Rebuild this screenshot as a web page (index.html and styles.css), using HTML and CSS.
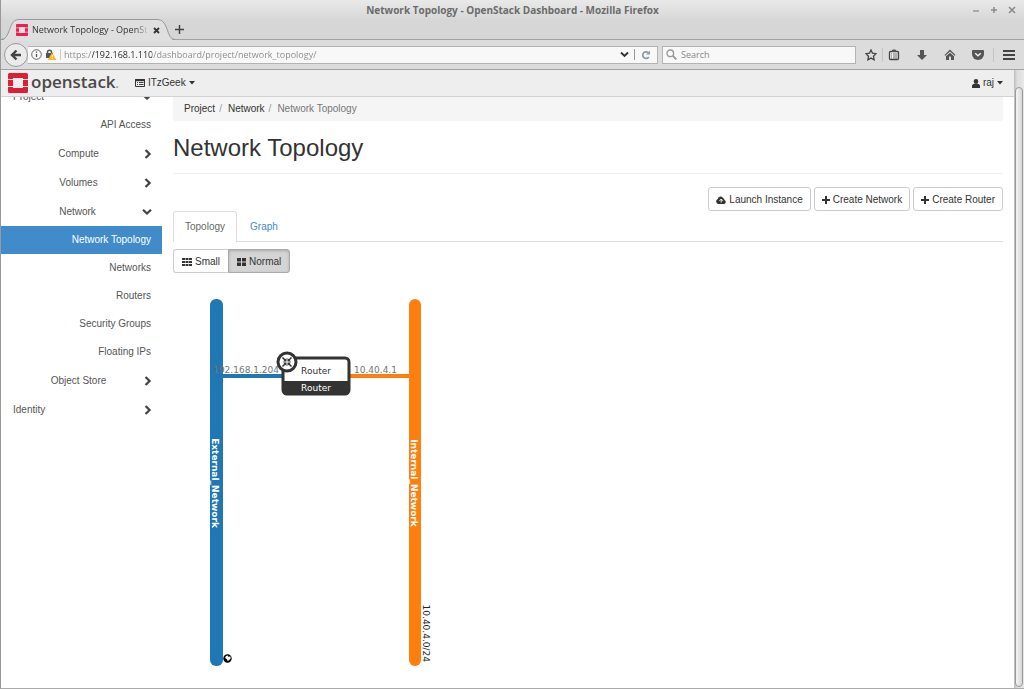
FILE: index.html
```html
<!DOCTYPE html>
<html lang="en">
<head>
<meta charset="utf-8">
<title>Network Topology - OpenStack Dashboard</title>
<link rel="stylesheet" href="styles.css">
</head>
<body>
<svg class="defs" aria-hidden="true">
  <symbol id="chev-right" viewBox="0 0 8 10"><path d="M1.500 1 5.600 5 1.500 9" fill="none" stroke="#444" stroke-width="2.200"/></symbol>
  <symbol id="chev-down" viewBox="0 0 10 8"><path d="M1 1.800 5 5.600 9 1.800" fill="none" stroke="#444" stroke-width="2.200"/></symbol>
  <symbol id="caret" viewBox="0 0 6 4"><path d="M0 0h6L3 3.500z" fill="#333"/></symbol>
  <symbol id="plus" viewBox="0 0 8 8"><path d="M3 0h2v3h3v2H5v3H3V5H0V3h3z" fill="#333"/></symbol>
  <symbol id="stack-mark" viewBox="0 0 20 20"><path d="M1.500 0h17Q20 0 20 1.500V6h-5V5H5v1H0V1.500Q0 0 1.500 0zM0 7h5v6H0zM15 7h5v6h-5zM0 14h5v1h10v-1h5v4.500Q20 20 18.500 20h-17Q0 20 0 18.500z"/></symbol>
</svg>

<div class="window">
  <header class="titlebar">
    <span class="title">Network Topology - OpenStack Dashboard - Mozilla Firefox</span>
    <div class="win-controls">
      <button aria-label="Minimize"><svg width="8" height="8"><path d="M1 5h6" stroke="#999" stroke-width="1.500"/></svg></button>
      <button aria-label="Maximize"><svg width="8" height="8"><path d="M1 4h6M4 1v6" stroke="#8a8a8a" stroke-width="1.500"/></svg></button>
      <button aria-label="Close"><svg width="8" height="8"><path d="m1 1 6 6M7 1 1 7" stroke="#8a8a8a" stroke-width="1.600"/></svg></button>
    </div>
  </header>

  <div class="tabstrip">
    <div class="tab">
      <svg class="tab-shape" viewBox="0 0 174 22"><path d="M0 21.500C10 21.500 7 1 17 .5H157C168 1 165 21.500 174 21.500V22H0z" fill="#dfdfdf"/><path d="M0 20.500C10 20.500 7 1 17 .5H157C168 1 165 20.500 174 20.500" fill="none" stroke="#999"/></svg>
      <svg class="favicon" width="12" height="12"><use href="#stack-mark" fill="#ee1f4e"/></svg>
      <span class="tab-label">Network Topology - OpenSt</span>
      <button class="tab-close" aria-label="Close tab"><svg width="7" height="7"><path d="m1 1 5 5M6 1 1 6" stroke="#333" stroke-width="1.800"/></svg></button>
    </div>
    <button class="new-tab" aria-label="New tab"><svg width="9" height="9"><path d="M0 4.500h9M4.500 0v9" stroke="#444" stroke-width="1.500"/></svg></button>
  </div>

  <div class="toolbar">
    <button class="back" aria-label="Back"><svg width="12" height="12" viewBox="0 0 12 12"><path d="M6.500 1.500 2 6l4.500 4.500M2 6h9" fill="none" stroke="#444" stroke-width="2.400"/></svg></button>
    <div class="urlbar">
      <svg width="11" height="11"><circle cx="5.500" cy="5.500" r="4.800" fill="none" stroke="#666"/><path d="M5.500 5v3M5.500 2.500v1.300" stroke="#555" stroke-width="1.300"/></svg>
      <svg width="12" height="11" viewBox="0 0 12 11"><path d="M2.500 5V3.300a2 2 0 0 1 4 0V5" fill="none" stroke="#555" stroke-width="1.500"/><rect x="1" y="4" width="7" height="5" fill="#555"/><path d="M7 3.500 11.500 11H2.800z" fill="#fbb917"/><path d="M7.200 6v2.300M7.200 9v1" stroke="#fff"/></svg>
      <span class="url-divider"></span>
      <input class="url" type="text" aria-label="Address" value="https://192.168.1.110/dashboard/project/network_topology/">
      <button aria-label="Show history"><svg width="9" height="7"><path d="m1 1.500 3.500 3.500L8 1.500" fill="none" stroke="#333" stroke-width="1.900"/></svg></button>
      <span class="url-divider dark"></span>
      <button class="reload" aria-label="Reload"><svg width="10" height="10" viewBox="0 0 10 10"><path d="M7.800 7A3.300 3.300 0 1 1 7 2.500" fill="none" stroke="#8d99a5" stroke-width="1.700"/><path d="M9 .5v4H5z" fill="#8d99a5"/></svg></button>
    </div>
    <label class="search">
      <svg width="11" height="11"><circle cx="4.300" cy="4.300" r="3.300" fill="none" stroke="#999" stroke-width="1.400"/><path d="m7 7 3.300 3.300" stroke="#999" stroke-width="1.800"/></svg>
      <input type="text" aria-label="Search" placeholder="Search">
    </label>
    <div class="tools">
      <button aria-label="Bookmark"><svg width="12" height="12" viewBox="0 0 12 12"><path d="m6 1 1.500 3.200 3.500.5-2.500 2.500.6 3.600L6 9.100l-3.100 1.700.6-3.600L1 4.700l3.500-.5z" fill="none" stroke="#444" stroke-width="1.300"/></svg></button>
      <span class="tool-divider near"></span>
      <div class="tool-group">
        <button aria-label="Bookmarks list"><svg width="12" height="12" viewBox="0 0 12 12"><rect x="1.500" y="2.500" width="9" height="8" rx="1" fill="#eee" stroke="#444" stroke-width="1.300"/><path d="M4.500 1h3v1.500h-3z" fill="#555" stroke="#555"/><path d="M3 5h1M5 5h4.500M3 7h1M5 7h4.500M3 9h1M5 9h4.500" stroke="#666" stroke-width=".9"/></svg></button>
        <button aria-label="Downloads"><svg width="12" height="12"><path d="M4 1h4v5h3L6 11 1 6h3z" fill="#555"/></svg></button>
        <button aria-label="Home"><svg width="12" height="12"><path d="M6 .5 11.500 6l-.7.700L6 2.500 1.200 6.700.5 6zM6 3.800l4 3.400V11H7V7.500H5V11H2V7.200z" fill="#555"/></svg></button>
        <button aria-label="Pocket"><svg width="12" height="12"><path d="M1 1h10q1 0 1 1v3a6 6 0 0 1-12 0V2q0-1 1-1z" fill="#555"/><path d="m3.200 4.200 2.800 2.600 2.800-2.600" fill="none" stroke="#eee" stroke-width="1.500"/></svg></button>
      </div>
      <span class="tool-divider far"></span>
      <button aria-label="Menu"><svg width="12" height="12"><path d="M0 2h12M0 6h12M0 10h12" stroke="#444" stroke-width="2"/></svg></button>
    </div>
  </div>

  <div class="viewport">
    <div class="page">
      <nav class="navbar">
        <a class="brand" href="#"><svg width="20" height="20"><use href="#stack-mark" fill="#dc1f36"/></svg><span>openstack<small>.</small></span></a>
        <button class="nav-btn"><svg width="10" height="8"><path d="M.5.500h9v7h-9z" fill="none" stroke="#333"/><path d="M0 1.200h10" stroke="#333" stroke-width="2"/><path d="M2 3.500h1M4 3.500h4.500M2 5.500h1M4 5.500h4.500" stroke="#444"/></svg>ITzGeek<svg width="6" height="4"><use href="#caret"/></svg></button>
        <button class="nav-btn user"><svg width="8" height="9"><circle cx="4" cy="2.400" r="2.300" fill="#333"/><path d="M0 9V7q0-2.500 4-2.500T8 7v2z" fill="#333"/></svg>raj<svg width="6" height="4"><use href="#caret"/></svg></button>
      </nav>

      <div class="columns">
        <aside class="sidebar">
          <a class="root" href="#"><span>Project</span><svg width="10" height="8"><use href="#chev-down"/></svg></a>
          <a class="leaf" href="#">API Access</a>
          <a class="group" href="#"><span>Compute</span><svg width="8" height="10"><use href="#chev-right"/></svg></a>
          <a class="group" href="#"><span>Volumes</span><svg width="8" height="10"><use href="#chev-right"/></svg></a>
          <a class="group" href="#"><span>Network</span><svg width="10" height="8"><use href="#chev-down"/></svg></a>
          <a class="leaf active" href="#">Network Topology</a>
          <a class="leaf" href="#">Networks</a>
          <a class="leaf" href="#">Routers</a>
          <a class="leaf" href="#">Security Groups</a>
          <a class="leaf" href="#">Floating IPs</a>
          <a class="group" href="#"><span>Object Store</span><svg width="8" height="10"><use href="#chev-right"/></svg></a>
          <a class="root" href="#"><span>Identity</span><svg width="8" height="10"><use href="#chev-right"/></svg></a>
        </aside>

        <main class="main">
          <nav class="crumbs" aria-label="Breadcrumb"><a href="#">Project</a><i>/</i><a href="#">Network</a><i>/</i><span>Network Topology</span></nav>
          <h1>Network Topology</h1>
          <div class="actions">
            <button class="btn"><svg width="10" height="8"><path d="M2.500 8A2.500 2.500 0 0 1 1.500 3.300 3 3 0 0 1 7 2a2.300 2.300 0 0 1 1.500 2A2.100 2.100 0 0 1 8 8z" fill="#333"/><path d="M5.200 6.500V4M3.500 4.800 5.200 3l1.700 1.800" stroke="#fff" fill="none"/></svg>Launch Instance</button>
            <button class="btn"><svg width="8" height="8"><use href="#plus"/></svg>Create Network</button>
            <button class="btn"><svg width="8" height="8"><use href="#plus"/></svg>Create Router</button>
          </div>
          <div class="tabs" role="tablist">
            <a class="page-tab current" role="tab" aria-selected="true" href="#">Topology</a>
            <a class="page-tab" role="tab" href="#">Graph</a>
          </div>
          <div class="sizes">
            <button class="btn"><svg width="10" height="8"><path d="M0 0h3v2H0zM3.500 0h3v2h-3zM7 0h3v2H7zM0 3h3v2H0zM3.500 3h3v2h-3zM7 3h3v2H7zM0 6h3v2H0zM3.500 6h3v2h-3zM7 6h3v2H7z" fill="#333"/></svg>Small</button>
            <button class="btn pressed"><svg width="9" height="8"><path d="M0 0h4v3.500H0zM5 0h4v3.500H5zM0 4.500h4V8H0zM5 4.500h4V8H5z" fill="#333"/></svg>Normal</button>
          </div>
          <svg class="topology" width="300" height="390" viewBox="0 0 300 390" role="img" aria-label="Network diagram">
            <rect x="37" y="14" width="13" height="367" rx="6" fill="#1f77b4"/>
            <rect x="236" y="14" width="12" height="367" rx="6" fill="#ff7f0e"/>
            <rect x="49" y="89" width="62" height="4" fill="#1f77b4"/>
            <rect x="175" y="89" width="62" height="4" fill="#ff7f0e"/>
            <text class="ip" x="106" y="88" text-anchor="end">192.168.1.204</text>
            <text class="ip" x="181" y="88">10.40.4.1</text>
            <rect x="110" y="73" width="66" height="36" rx="4" fill="#fff" stroke="#333" stroke-width="3"/>
            <path d="M110 96h66v10q0 3-3 3h-60q-3 0-3-3z" fill="#333"/>
            <text class="node" x="143" y="89" text-anchor="middle">Router</text>
            <text class="node light" x="143" y="106" text-anchor="middle">Router</text>
            <circle cx="114" cy="77" r="9" fill="#fff" stroke="#333" stroke-width="3"/>
            <path d="m109.500 72.500 3 3M118.500 72.500l-3 3M109.500 81.500l3-3M118.500 81.500l-3-3" stroke="#333" stroke-width="1.500"/>
            <path d="M113.500 73v3.500H110zM114.500 73v3.500h3.500zM113.500 81v-3.500H110zM114.500 81v-3.500h3.500z" fill="#333"/>
            <text class="net" transform="translate(39 198) rotate(90)" text-anchor="middle">External_Network</text>
            <text class="net" transform="translate(238 198) rotate(90)" text-anchor="middle">Internal_Network</text>
            <text class="cidr" transform="translate(250 377) rotate(90)" text-anchor="end">10.40.4.0/24</text>
            <circle cx="54.500" cy="373.500" r="4.200" fill="#000"/>
            <path d="m52 373 1-2 2-.5.5 1.500 1.800-.8.500 2-1.800 2-1.500.8-.500-1.800z" fill="#fff"/>
          </svg>
        </main>
      </div>
    </div>
    <div class="scrollbar"><div class="thumb"></div></div>
  </div>
</div>
</body>
</html>
```

FILE: styles.css
```css
* { box-sizing: border-box; }
body { margin: 0; font: 10px/14px "Liberation Sans", Arial, sans-serif; color: #333; }
button { border: 0; padding: 0; margin: 0; background: none; font: inherit; color: inherit; display: flex; align-items: center; justify-content: center; }
input { border: 0; padding: 0; margin: 0; outline: 0; background: none; min-width: 0; font: inherit; }
a { color: inherit; text-decoration: none; }
svg { display: block; flex: none; }
.defs { position: absolute; width: 0; height: 0; }

.window { display: flex; flex-direction: column; height: 100vh; border-left: 1px solid #999; border-bottom: 1px solid #aaa; overflow: hidden; }

/* Browser frame */
.titlebar, .tabstrip, .toolbar { font-family: "Open Sans", "Noto Sans", sans-serif; flex: none; }
.titlebar { display: grid; grid-template-columns: 1fr auto 1fr; align-items: center; height: 19px; background: linear-gradient(#e9e9e9, #d8d8d8); }
.title { grid-column: 2; font-size: 10px; font-weight: 700; color: #6b6b6b; }
.win-controls { display: flex; justify-content: flex-end; gap: 10px; padding-right: 8px; }
.tabstrip { display: flex; height: 21px; background: #d6d6d6; border-bottom: 1px solid #a3a3a3; }
.tab { position: relative; display: flex; align-items: center; width: 174px; height: 22px; padding: 0 15px; gap: 4px; }
.tab-shape { position: absolute; left: 0; top: 0; width: 100%; height: 100%; }
.favicon, .tab-label, .tab-close { position: relative; }
.tab-label { flex: 1; overflow: hidden; white-space: nowrap; font-size: 9px; -webkit-mask-image: linear-gradient(90deg, #000 88%, transparent); }
.new-tab { width: 9px; height: 21px; }
.toolbar { display: flex; align-items: center; height: 30px; padding: 0 9px 0 3px; background: #dcdcdc; border-bottom: 1px solid #a3a3a3; }
.back { width: 24px; height: 24px; border: 1px solid #999; border-radius: 50%; background: #ebebeb; }
.urlbar { display: flex; align-items: center; flex: 1; height: 18px; gap: 3px; padding: 0 6px 0 3px; border: 1px solid #b3b3b3; border-left: 0; background: #f8f8f8; }
.url-divider { width: 1px; height: 11px; background: #ccc; }
.url-divider.dark { margin: 0 3px 0 2px; background: #999; }
.url { flex: 1; font-size: 9px; color: transparent; background: linear-gradient(90deg, #888 28px, #222 28px 88px, #888 88px); -webkit-background-clip: text; background-clip: text; }
.search { display: flex; align-items: center; gap: 4px; width: 194px; height: 18px; margin-left: 4px; padding: 0 3px; border: 1px solid #b3b3b3; background: #f8f8f8; font-size: 9px; }
.search input { flex: 1; }
.search input::placeholder { color: #888; opacity: 1; }
.tools { display: flex; align-items: center; margin-left: 9px; }
.tool-group { display: flex; gap: 16px; }
.tool-divider { width: 1px; height: 14px; background: #c4c4c4; }
.tool-divider.near { margin: 0 5px; }
.tool-divider.far { margin: 0 9px; }

/* Dashboard */
.viewport { display: flex; flex: 1; min-height: 0; background: #fff; }
.page { display: flex; flex-direction: column; flex: 1; min-width: 0; overflow: hidden; }
.navbar { display: flex; align-items: center; flex: none; height: 27px; padding: 0 11px 0 7px; background: #eee; border-bottom: 1px solid #d3d3d3; }
.brand { display: flex; align-items: center; gap: 3px; color: #4d4848; font: 600 17px/20px "Open Sans", sans-serif; }
.brand small { font-size: 12px; color: #999; }
.nav-btn { gap: 3px; margin-left: 16px; }
.nav-btn.user { margin-left: auto; }
.columns { display: flex; flex: 1; min-height: 0; overflow: hidden; }
.sidebar { flex: none; width: 161px; margin-top: -15px; color: #555; }
.sidebar a { display: flex; align-items: center; height: 28px; }
.sidebar .root, .sidebar .group { height: 29px; padding: 0 10px 0 12px; }
.sidebar a > span { flex: 1; }
.sidebar .group > span { text-align: center; }
.sidebar .leaf { justify-content: flex-end; padding-right: 11px; }
.sidebar .active { background: #428bca; color: #fff; }
.main { flex: 1; min-width: 0; padding: 0 11px; }
.crumbs { display: flex; height: 24px; padding: 5px 11px; background: #f5f5f5; border-radius: 0 0 3px 3px; }
.crumbs i { margin: 0 6px 0 4px; color: #999; font-style: normal; }
.crumbs span { color: #777; }
h1 { margin: 13px 0; padding-bottom: 11px; border-bottom: 1px solid #eee; font-size: 24px; line-height: 28px; font-weight: 400; }
.actions { display: flex; justify-content: flex-end; gap: 3px; }
.btn { height: 24px; padding: 1px 8px 0; gap: 3px; border: 1px solid #ccc; border-radius: 3px; background: #fff; white-space: nowrap; }
.actions .btn { padding: 1px 7px 0; }
.tabs { display: flex; border-bottom: 1px solid #ddd; }
.page-tab { height: 30px; padding: 9px 13px 0; color: #428bca; }
.page-tab.current { margin-bottom: -1px; height: 31px; padding: 8px 11px 0; border: 1px solid #ddd; border-bottom: 0; border-radius: 3px 3px 0 0; background: #fff; color: #666; }
.sizes { display: flex; margin-top: 7px; }
.sizes .btn:first-child { border-radius: 3px 0 0 3px; border-right: 0; }
.sizes .pressed { border-color: #aaa; border-radius: 0 3px 3px 0; background: #d4d4d4; box-shadow: inset 0 1px 3px #aaa; }
.topology { margin-top: 12px; font-family: "DejaVu Sans", sans-serif; font-size: 9px; }
.ip { fill: #757575; }
.node { fill: #333; }
.node.light, .net { fill: #fff; }
.net { font-weight: 700; }
.cidr { fill: #222; }
.scrollbar { flex: none; width: 10px; padding: 17px 1px 1px; background: linear-gradient(90deg, #bbb, #ddd 30%, #e8e8e8); }
.thumb { height: 100%; border: 1px solid #999; border-radius: 4px; background: linear-gradient(90deg, #f4f4f4, #d8d8d8); }
```
